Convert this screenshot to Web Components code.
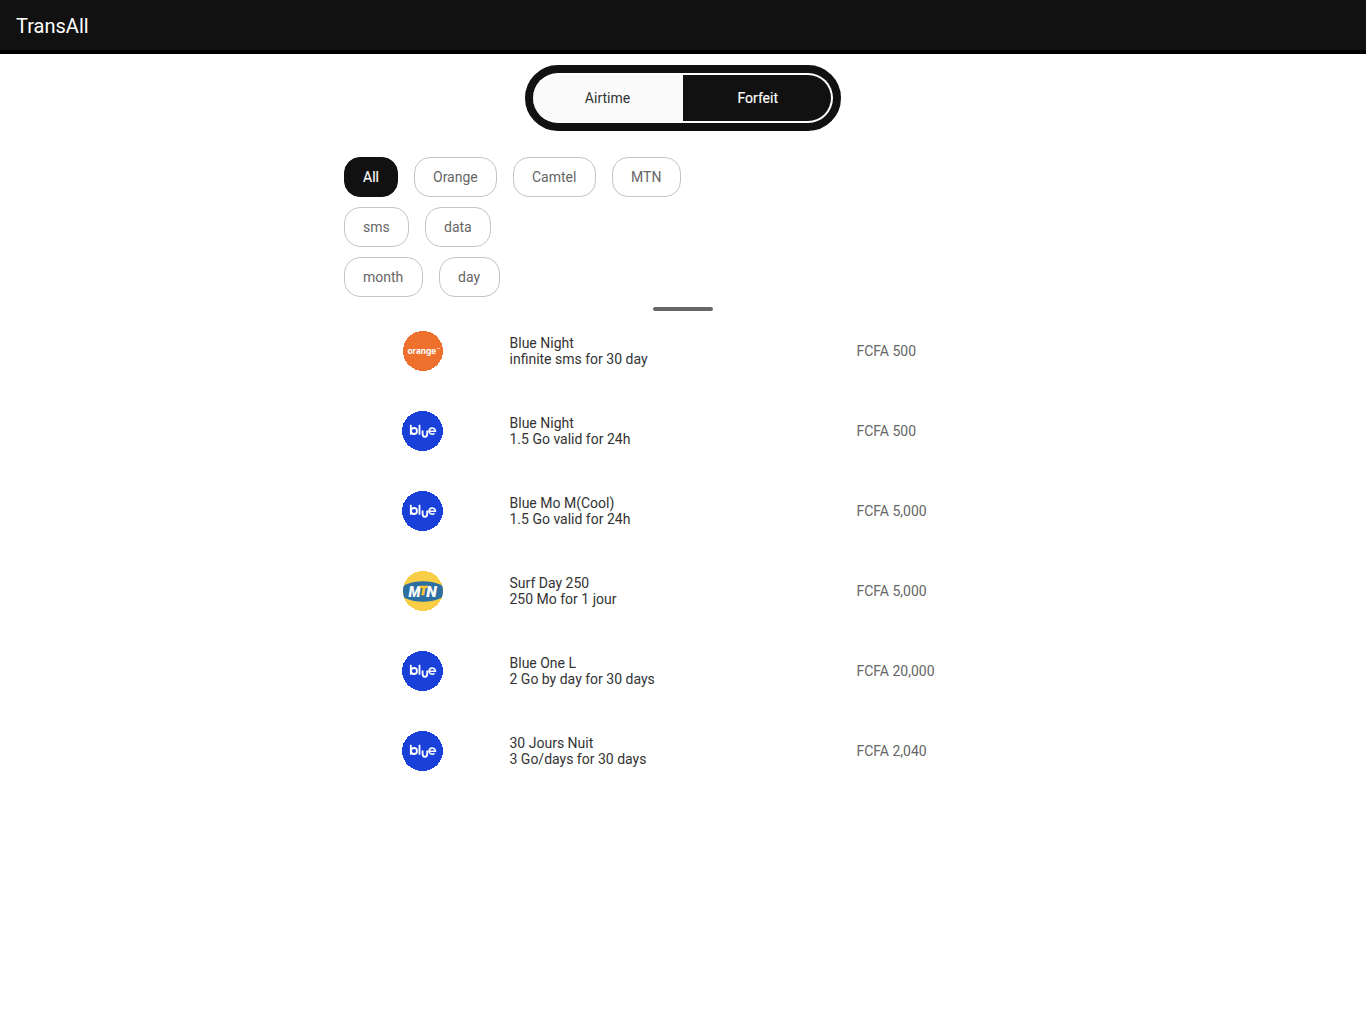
<!DOCTYPE html>
<html lang="en">
<head>
<meta charset="utf-8">
<title>TransAll</title>
<style>
body{margin:0;background:#fff;font:14px/16px Roboto,sans-serif;color:#333}
</style>
</head>
<body>
<trans-app></trans-app>
<script>
const define = (name, render) => customElements.define(name, class extends HTMLElement {
  connectedCallback() {
    if (this.shadowRoot) return;
    const t = document.createElement('template');
    t.innerHTML = render(this);
    this.attachShadow({mode: 'open'}).append(t.content.cloneNode(true));
  }
});

define('app-header', () => `
<style>:host{display:flex;align-items:center;box-sizing:border-box;height:54px;padding:0 16px 0;background:#111;border-bottom:4px solid #000;color:#fff;font-size:20px;line-height:24px}
span{padding-top:2px}</style><span><slot></slot></span>`);

define('mode-switch', () => `
<style>:host{display:block;box-sizing:border-box;width:316px;height:66px;border:8px solid #111;border-radius:33px;background:#111}
.track{display:flex;height:50px}
.off,.on{display:flex;align-items:center;justify-content:center;box-sizing:border-box;width:150px;height:50px;border:2px solid #fff}
.off{border-width:2px 0;border-radius:25px 0 0 25px;background:#fafafa;color:#333;padding-right:1px}
.on{border-left:0;border-radius:0 25px 25px 0;background:#111;color:#fff;-webkit-text-stroke:.15px #fff;padding-left:1.5px}</style>
<div class="track"><div class="off"><slot name="off"></slot></div><div class="on"><slot name="on"></slot></div></div>`);

define('filter-chip', el => `
<style>:host{display:flex;align-items:center;box-sizing:border-box;height:40px;width:${el.getAttribute('width')}px;padding:0 0 0 18px;border:1px solid #c4c4c4;border-radius:16px;color:#666;white-space:nowrap}
:host([active]){background:#111;border-color:#111;color:#fff;-webkit-text-stroke:.15px #fff}</style><slot></slot>`);

define('chip-row', () => `
<style>:host{display:flex;gap:16px;margin-bottom:10px}</style><slot></slot>`);

const logos = {
  orange: `<circle cx="21" cy="20" r="20" fill="#ed702d" shape-rendering="crispEdges"/>
    <text x="5.4" y="23" textLength="29" lengthAdjust="spacingAndGlyphs" font-family="Inter" font-weight="700" font-size="8" fill="#fff">orange</text>
    <path d="M35 17.5h1.3m.6 0h1.2" stroke="#fff" stroke-opacity=".75" stroke-width=".9"/>`,
  blue: `<ellipse cx="20.5" cy="20" rx="20.5" ry="20" fill="#1941da" shape-rendering="crispEdges"/>
    <g fill="none" stroke="#fff" stroke-width="1.8">
    <path d="M8.8 13.8v9.9"/><circle cx="12" cy="20" r="3"/>
    <path d="M17.5 13.8v9.9"/><path d="M20.6 19.5v3.6a2.3 2.7 0 0 0 4.6 0v-3.6"/>
    <path d="M27.4 20.2h6a3.2 3.1 0 1 0-.9 2.1" stroke-width="1.6"/></g>`,
  mtn: `<clipPath id="c"><circle cx="21" cy="20" r="20"/></clipPath><circle cx="21" cy="20" r="20" fill="#f8ce46" shape-rendering="crispEdges"/>
    <ellipse cx="21" cy="20.5" rx="23" ry="10.3" fill="#2c6fa3" clip-path="url(#c)"/>
    <g font-family="Roboto" font-size="14.5" font-weight="900" font-style="italic" fill="#fff">
    <text x="6.6" y="25.6" textLength="12" lengthAdjust="spacingAndGlyphs">M</text>
    <text x="24.3" y="25.6" textLength="10.5" lengthAdjust="spacingAndGlyphs">N</text>
    <text x="17.4" y="24" fill="#fbc52f" stroke="#fbc52f" stroke-width=".7" font-size="12.5">T</text></g>`
};
define('operator-logo', el => `
<style>:host{display:block;width:42px;height:40px}svg{display:block}</style>
<svg width="42" height="40" viewBox="0 0 42 40">${logos[el.getAttribute('name')]}</svg>`);

define('offer-row', el => `
<style>:host{display:grid;grid-template-columns:107.5px 346.9px 120px;align-items:center;height:80px}
.title,.detail{white-space:nowrap}.price{color:#666}</style>
<operator-logo name="${el.getAttribute('logo')}"></operator-logo>
<div><div class="title"><slot name="title"></slot></div><div class="detail"><slot name="detail"></slot></div></div>
<div class="price"><slot></slot></div>`);

const chips = row => `<chip-row>${row.map(([t, w, a]) => `<filter-chip width="${w}" ${a || ''}>${t}</filter-chip>`).join('')}</chip-row>`;
const offers = [
  ['orange', 'Blue Night', 'infinite sms for 30 day', '500'],
  ['blue', 'Blue Night', '1.5 Go valid for 24h', '500'],
  ['blue', 'Blue Mo M(Cool)', '1.5 Go valid for 24h', '5,000'],
  ['mtn', 'Surf Day 250', '250 Mo for 1 jour', '5,000'],
  ['blue', 'Blue One L', '2 Go by day for 30 days', '20,000'],
  ['blue', '30 Jours Nuit', '3 Go/days for 30 days', '2,040']
];
define('trans-app', () => `
<style>:host{display:block}
main{display:flex;flex-direction:column;align-items:center;padding-top:11px}
.filters{width:678px;margin-top:26px}
.handle{width:60px;height:4px;border-radius:2px;background:#666}
.offers{width:562px}</style>
<app-header>TransAll</app-header>
<main>
<mode-switch><span slot="off">Airtime</span><span slot="on">Forfeit</span></mode-switch>
<div class="filters">
${chips([['All', 54, 'active'], ['Orange', 83], ['Camtel', 83], ['MTN', 69]])}
${chips([['sms', 65], ['data', 66]])}
${chips([['month', 79], ['day', 61]])}
</div>
<div class="handle"></div>
<div class="offers">${offers.map(([l, t, d, p]) => `<offer-row logo="${l}"><span slot="title">${t}</span><span slot="detail">${d}</span>FCFA ${p}</offer-row>`).join('')}</div>
</main>`);
</script>
</body>
</html>
